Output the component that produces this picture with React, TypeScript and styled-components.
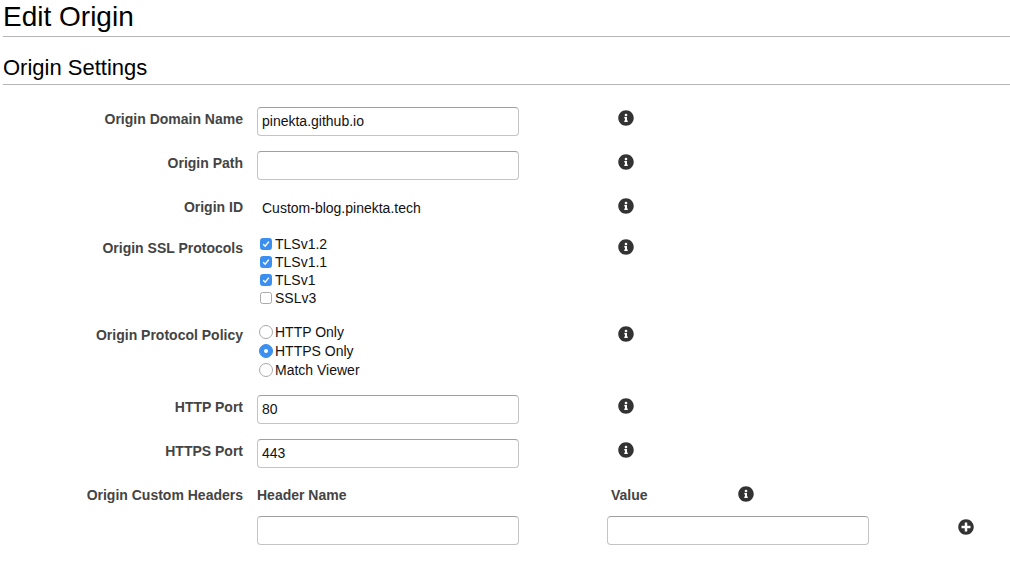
import React from "react";
import styled, { createGlobalStyle } from "styled-components";
import { FaInfoCircle, FaPlusCircle } from "react-icons/fa";

const Global = createGlobalStyle`
  html, body { margin: 0; padding: 0; background: #fff; }
  body { font-family: "Liberation Sans", Arial, sans-serif; color: #000; overflow: hidden; }
`;

const Page = styled.div`
  width: 1010px;
  height: 574px;
  padding-left: 3px;
  box-sizing: border-box;
`;

const Title = styled.h1`
  margin: 0;
  height: 36px;
  font-size: 28px;
  font-weight: 400;
  line-height: 33px;
  border-bottom: 1px solid #b5b5b5;
  white-space: nowrap;
`;

const SubTitle = styled.h2`
  margin: 0;
  padding-top: 17px;
  height: 30px;
  font-size: 22px;
  font-weight: 400;
  line-height: 27px;
  border-bottom: 1px solid #b5b5b5;
`;

const Form = styled.div`
  display: flex;
  flex-direction: column;
  padding-top: 22px;
`;

const Row = styled.div<{ $h: number; $after: number }>`
  display: grid;
  grid-template-columns: 240px 262px 1fr;
  column-gap: 14px;
  height: ${(p) => p.$h}px;
  margin-bottom: ${(p) => p.$after}px;
`;

const Label = styled.div<{ $top: number }>`
  font-size: 14px;
  font-weight: 700;
  color: #444;
  text-align: right;
  line-height: 16px;
  padding-top: ${(p) => p.$top}px;
  white-space: nowrap;
`;

const Input = styled.input`
  box-sizing: border-box;
  width: 262px;
  height: 29px;
  padding: 0 4px 1px;
  border: 1px solid #c4c4c4;
  border-top-color: #a0a0a0;
  border-radius: 4px;
  background: #fff;
  font-family: "Liberation Sans", Arial, sans-serif;
  font-size: 14px;
  color: #111;
  outline: none;
`;

const Static = styled.div`
  font-size: 14px;
  line-height: 16px;
  padding: 5px 0 0 5px;
  color: #111;
`;

const InfoSlot = styled.div<{ $top: number }>`
  padding: ${(p) => p.$top}px 0 0 85px;
  color: #333;
  line-height: 0;
  font-size: 16px;
`;

const Options = styled.div<{ $step: number }>`
  display: grid;
  grid-auto-rows: ${(p) => p.$step}px;
  padding-left: 3px;
`;

const Option = styled.label`
  display: flex;
  align-items: center;
  gap: 2px;
  font-size: 14px;
  color: #111;
  white-space: nowrap;
`;

const Check = styled.span<{ $on?: boolean }>`
  box-sizing: border-box;
  width: 12px;
  height: 12px;
  flex: none;
  border-radius: 2.5px;
  border: 1px solid ${(p) => (p.$on ? "#3b8ff0" : "#a9a9a9")};
  background: ${(p) => (p.$on ? "#3b8ff0" : "#fff")};
  display: flex;
  align-items: center;
  justify-content: center;
  margin-right: 1px;
`;

const Radio = styled.span<{ $on?: boolean }>`
  box-sizing: border-box;
  width: 14px;
  height: 14px;
  flex: none;
  margin-left: -1px;
  border-radius: 50%;
  border: 1px solid ${(p) => (p.$on ? "#3b8ff0" : "#a9a9a9")};
  background: ${(p) => (p.$on ? "#3b8ff0" : "#fff")};
  display: flex;
  align-items: center;
  justify-content: center;
  &::after {
    content: "";
    display: ${(p) => (p.$on ? "block" : "none")};
    width: 4px;
    height: 4px;
    border-radius: 50%;
    background: #fff;
  }
`;

const HeaderBlock = styled.div`
  display: grid;
  grid-template-columns: 240px 262px 88px 262px 89px 16px;
  grid-template-rows: 29px 29px;
  row-gap: 4px;
`;

const ColHead = styled.div`
  font-size: 14px;
  font-weight: 700;
  color: #444;
  line-height: 16px;
  padding-top: 4px;
  white-space: nowrap;
`;

const HeaderName = styled(ColHead)`
  grid-column: 2;
  margin-left: 14px;
`;

const HeadValue = styled(ColHead)`
  grid-column: 4 / span 3;
  display: flex;
  align-items: flex-start;
  gap: 90px;
  margin-left: 18px;
`;

const HeadInfo = styled.span`
  color: #333;
  line-height: 0;
  font-size: 16px;
  margin-top: -1px;
`;

const HeaderCell = styled.div<{ $col: number }>`
  grid-row: 2;
  grid-column: ${(p) => p.$col};
  margin-left: 14px;
`;

const Plus = styled.span`
  grid-row: 2;
  grid-column: 6;
  color: #333;
  line-height: 0;
  font-size: 16px;
  padding-top: 3px;
  margin-left: 14px;
`;

const Tick = () => (
  <svg width="8" height="8" viewBox="0 0 8 8" fill="none">
    <path d="M1.2 4.2 L3.2 6.2 L6.8 1.6" stroke="#fff" strokeWidth="1.5" />
  </svg>
);

const Info = ({ top }: { top: number }) => (
  <InfoSlot $top={top}>
    <FaInfoCircle />
  </InfoSlot>
);

export default function App() {
  return (
    <Page>
      <Global />
      <Title>Edit Origin</Title>
      <SubTitle>Origin Settings</SubTitle>
      <Form>
        <Row $h={29} $after={15}>
          <Label $top={4}>Origin Domain Name</Label>
          <Input defaultValue="pinekta.github.io" />
          <Info top={3} />
        </Row>
        <Row $h={29} $after={15}>
          <Label $top={4}>Origin Path</Label>
          <Input />
          <Info top={3} />
        </Row>
        <Row $h={29} $after={11}>
          <Label $top={4}>Origin ID</Label>
          <Static>Custom-blog.pinekta.tech</Static>
          <Info top={3} />
        </Row>
        <Row $h={72} $after={15}>
          <Label $top={5}>Origin SSL Protocols</Label>
          <Options $step={18}>
            <Option><Check $on><Tick /></Check>TLSv1.2</Option>
            <Option><Check $on><Tick /></Check>TLSv1.1</Option>
            <Option><Check $on><Tick /></Check>TLSv1</Option>
            <Option><Check />SSLv3</Option>
          </Options>
          <Info top={4} />
        </Row>
        <Row $h={57} $after={16}>
          <Label $top={5}>Origin Protocol Policy</Label>
          <Options $step={19}>
            <Option><Radio />HTTP Only</Option>
            <Option><Radio $on />HTTPS Only</Option>
            <Option><Radio />Match Viewer</Option>
          </Options>
          <Info top={4} />
        </Row>
        <Row $h={29} $after={15}>
          <Label $top={4}>HTTP Port</Label>
          <Input defaultValue="80" />
          <Info top={3} />
        </Row>
        <Row $h={29} $after={15}>
          <Label $top={4}>HTTPS Port</Label>
          <Input defaultValue="443" />
          <Info top={3} />
        </Row>
        <HeaderBlock>
          <Label $top={4}>Origin Custom Headers</Label>
          <HeaderName>Header Name</HeaderName>
          <HeadValue>
            Value
            <HeadInfo><FaInfoCircle /></HeadInfo>
          </HeadValue>
          <HeaderCell $col={2}><Input /></HeaderCell>
          <HeaderCell $col={4}><Input /></HeaderCell>
          <Plus><FaPlusCircle /></Plus>
        </HeaderBlock>
      </Form>
    </Page>
  );
}
